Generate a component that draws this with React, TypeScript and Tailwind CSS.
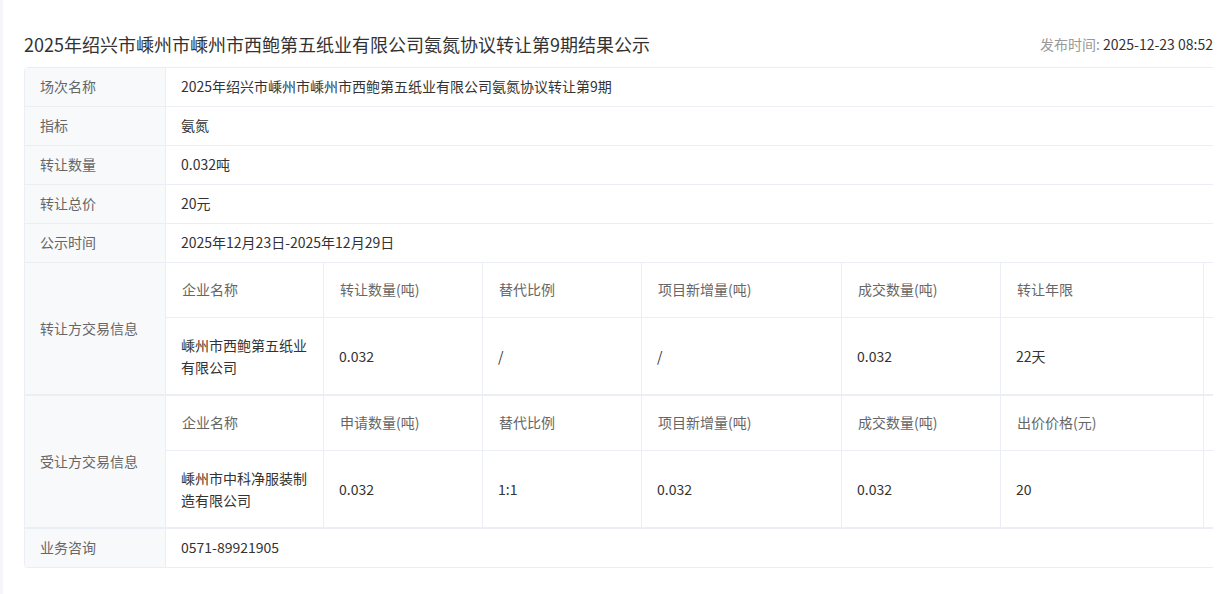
import React from 'react'

type Cell = { text: string; w: string }

const basicRows = [
    { label: '场次名称', value: '2025年绍兴市嵊州市嵊州市西鲍第五纸业有限公司氨氮协议转让第9期' },
    { label: '指标', value: '氨氮' },
    { label: '转让数量', value: '0.032吨' },
    { label: '转让总价', value: '20元' },
    { label: '公示时间', value: '2025年12月23日-2025年12月29日' },
]

const colWidths = ['w-[158px]', 'w-[159px]', 'w-[159px]', 'w-[200px]', 'w-[159px]', 'w-[203px]', 'w-[200px]']

const sellerHead = ['企业名称', '转让数量(吨)', '替代比例', '项目新增量(吨)', '成交数量(吨)', '转让年限', '']
const sellerData = ['嵊州市西鲍第五纸业有限公司', '0.032', '/', '/', '0.032', '22天', '']
const buyerHead = ['企业名称', '申请数量(吨)', '替代比例', '项目新增量(吨)', '成交数量(吨)', '出价价格(元)', '']
const buyerData = ['嵊州市中科净服装制造有限公司', '0.032', '1:1', '0.032', '0.032', '20', '']

const toCells = (arr: string[]): Cell[] => arr.map((text, i) => ({ text, w: colWidths[i] }))

const Label = ({ children, last }: { children: React.ReactNode; last?: boolean }) => (
    <div className={`w-[141px] shrink-0 flex items-center pl-[15px] pb-px bg-[#f8f9fb] text-[#666] border-r border-[#ebeef5] ${last ? 'rounded-bl-[4px]' : ''}`}>
        {children}
    </div>
)

const SimpleRow = ({ label, value, last }: { label: string; value: string; last?: boolean }) => (
    <div className={`flex ${last ? 'h-[38px]' : 'h-[39px] border-b border-[#ebeef5]'}`}>
        <Label last={last}>{label}</Label>
        <div className="flex items-center pl-[15px] pb-px text-[#333]">{value}</div>
    </div>
)

const NestedBlock = ({ label, head, data }: { label: string; head: Cell[]; data: Cell[] }) => (
    <div className="flex border-b-2 border-[#ebeef5]">
        <Label>{label}</Label>
        <div className="flex flex-col">
            <div className="flex h-[55px] border-b border-[#ebeef5]">
                {head.map((c, i) => (
                    <div key={i} className={`${c.w} shrink-0 flex items-center pl-4 pr-4 pb-px text-[#666] border-r border-[#ebeef5]`}>
                        {c.text}
                    </div>
                ))}
            </div>
            <div className="flex h-[76px]">
                {data.map((c, i) => (
                    <div key={i} className={`${c.w} shrink-0 flex items-center pl-[15px] pr-[15px] pb-px leading-[22px] text-[#333] border-r border-[#ebeef5]`}>
                        {c.text}
                    </div>
                ))}
            </div>
        </div>
    </div>
)

export default function App() {
    return (
        <div className="flex min-h-[594px] bg-white font-['Noto_Sans_CJK_SC','Microsoft_YaHei',sans-serif] text-[14px]">
            <div className="w-[3px] shrink-0 bg-[#f5f6fa]" />
            <div className="pl-[21px]">
                <div className="w-[1189px] overflow-hidden">
                    <div className="mt-[21px] h-[46px] flex items-center justify-between">
                        <h1 className="text-[18px] text-[#333]">2025年绍兴市嵊州市嵊州市西鲍第五纸业有限公司氨氮协议转让第9期结果公示</h1>
                        <div className="text-[14px]">
                            <span className="text-[#999]">发布时间: </span>
                            <span className="text-[#333]">2025-12-23 08:52</span>
                        </div>
                    </div>
                    <div className="w-[1400px] border border-[#ebeef5] rounded-[4px] shadow-[0_1px_3px_rgba(0,0,0,0.05)]">
                        {basicRows.map((r) => (
                            <SimpleRow key={r.label} label={r.label} value={r.value} />
                        ))}
                        <NestedBlock label="转让方交易信息" head={toCells(sellerHead)} data={toCells(sellerData)} />
                        <NestedBlock label="受让方交易信息" head={toCells(buyerHead)} data={toCells(buyerData)} />
                        <SimpleRow label="业务咨询" value="0571-89921905" last />
                    </div>
                </div>
            </div>
        </div>
    )
}
